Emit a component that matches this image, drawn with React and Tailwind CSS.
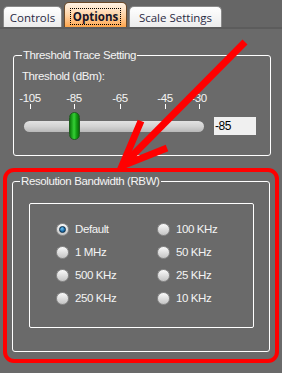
const rbwOptions = [
  { label: 'Default', checked: true },
  { label: '100 KHz' },
  { label: '1 MHz' },
  { label: '50 KHz' },
  { label: '500 KHz' },
  { label: '25 KHz' },
  { label: '250 KHz' },
  { label: '10 KHz' },
];

const ticks = [
  { label: '-105', ml: 'ml-[1px]' },
  { label: '-85', ml: 'ml-[14px]' },
  { label: '-65', ml: 'ml-[16px]' },
  { label: '-45', ml: 'ml-[15px]' },
  { label: '-30', ml: 'ml-[4px]' },
];

function Radio({ checked }) {
  return (
    <span className="flex h-[13px] w-[13px] shrink-0 items-center justify-center rounded-full border border-[#8c8c8c] bg-gradient-to-b from-[#fafafa] to-[#c4c4c4]">
      {checked && (
        <span className="h-[7px] w-[7px] rounded-full border border-[#0b2f4a] bg-[radial-gradient(circle_at_40%_35%,#6fc2f0,#1a6aa8_60%,#0d3f66)]" />
      )}
    </span>
  );
}

export default function App() {
  return (
    <div className="relative h-[373px] w-[282px] overflow-hidden bg-[#6a6a6a] font-['Liberation_Sans',Arial,sans-serif] text-[11.5px] leading-[13px] tracking-[-0.4px] text-[#f4f4f4]">
      {/* tabs */}
      <div className="flex h-[29px] items-end border-b-[2px] border-[#5c5c5c] bg-[#666666] pl-[3px] font-['Open_Sans',sans-serif] tracking-normal">
        <div className="flex h-[21px] w-[59px] items-center justify-center rounded-t-[5px] border border-b-0 border-[#8a8a8a] bg-gradient-to-b from-[#ffffff] to-[#ececec] text-[11.5px] text-[#2a2a44]">
          Controls
        </div>
        <div className="ml-[2px] flex h-[25px] w-[63px] items-center justify-center rounded-t-[5px] border border-b-0 border-[#6b4a2a] bg-gradient-to-b from-[#fff3e6] via-[#ffd4a6] to-[#ffa64a] px-[4px] pt-[2px]">
          <span className="border border-dotted border-black px-[2px] text-[11.5px] font-bold leading-[15px] text-[#141428]">
            Options
          </span>
        </div>
        <div className="ml-[2px] flex h-[21px] w-[93px] items-center justify-center rounded-t-[5px] border border-b-0 border-[#8a8a8a] bg-gradient-to-b from-[#ffffff] to-[#ececec] text-[11.5px] text-[#2a2a44]">
          Scale Settings
        </div>
      </div>

      {/* Threshold Trace Setting */}
      <fieldset className="ml-[13px] mt-[20px] w-[258px] rounded-[3px] border border-white px-0 pb-[15px] pt-[8px]">
        <legend className="ml-[8px] px-[1px] leading-[13px]">Threshold Trace Setting</legend>
        <div className="ml-[8px]">Threshold (dBm):</div>
        <div className="mt-[9px] flex">
          {ticks.map((t) => (
            <span key={t.label} className={`${t.ml} w-[30px] text-center`}>
              {t.label}
            </span>
          ))}
        </div>
        <div className="-mt-[1px] flex h-[5px]">
          <span className="ml-[16px] w-px bg-white" />
          <span className="ml-[43px] w-px bg-white" />
          <span className="ml-[45px] w-px bg-white" />
          <span className="ml-[44px] w-px bg-white" />
          <span className="ml-[33px] w-px bg-white" />
        </div>
        <div className="mt-[3px] flex h-[28px] items-center">
          <div className="relative ml-[10px] flex h-[28px] w-[180px] items-center">
            <div className="h-[11px] w-full rounded-full bg-gradient-to-b from-[#e2e2e2] via-[#d2d2d2] to-[#b8b8b8]" />
            <div className="absolute left-[45px] top-0 h-[28px] w-[11px] rounded-full border border-[#1f5c1f] bg-[linear-gradient(90deg,#0a7a0a,#35d035_45%,#14a014_70%,#0a6a0a)]" />
          </div>
          <div className="ml-[10px] flex h-[18px] w-[42px] items-center bg-[#f0f0f0] pl-[1px] text-[12px] text-black">
            -85
          </div>
        </div>
      </fieldset>

      {/* red highlight around RBW */}
      <div className="ml-[3px] mt-[12px] w-[276px] rounded-[11px] border-[4px] border-[#ff0000] pb-[7px] pt-[3px]">
        <fieldset className="ml-[5px] w-[258px] rounded-[3px] border border-white px-0 pb-[23px] pt-[15px]">
          <legend className="ml-[7px] px-[1px] leading-[13px]">Resolution Bandwidth (RBW)</legend>
          <div className="ml-[16px] w-[225px] rounded-[2px] border border-white pb-[17px] pl-[26px] pt-[14px]">
            <div className="grid grid-cols-[101px_auto]">
              {rbwOptions.map((o) => (
                <div key={o.label} className="flex h-[23px] items-center">
                  <Radio checked={o.checked} />
                  <span className="ml-[6px]">{o.label}</span>
                </div>
              ))}
            </div>
          </div>
        </fieldset>
      </div>

      {/* red arrow annotation */}
      <svg className="pointer-events-none absolute left-0 top-0" width="282" height="373" viewBox="0 0 282 373">
        <line x1="245" y1="42" x2="122" y2="166" stroke="#ff0000" strokeWidth="7" />
        <polyline points="141,121 122,166 167,148" fill="none" stroke="#ff0000" strokeWidth="7" strokeLinejoin="miter" />
      </svg>
    </div>
  );
}
